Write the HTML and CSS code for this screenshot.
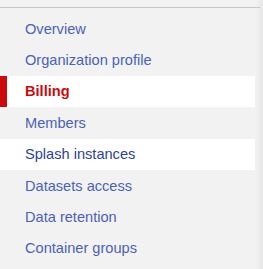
FILE: index.html
```html
<!DOCTYPE html>
<html lang="en">
<head>
    <meta charset="UTF-8">
    <meta name="viewport" content="width=device-width, initial-scale=1.0">
    <title>Organization settings</title>
    <link rel="stylesheet" href="styles.css">
</head>
<body>
    <div class="sidebar">
        <ul class="nav">
            <li><a href="#">Overview</a></li>
            <li><a href="#">Organization profile</a></li>
            <li class="active"><a href="#">Billing</a></li>
            <li><a href="#">Members</a></li>
            <li class="hover"><a href="#">Splash instances</a></li>
            <li><a href="#">Datasets access</a></li>
            <li><a href="#">Data retention</a></li>
            <li><a href="#">Container groups</a></li>
        </ul>
    </div>
</body>
</html>
```

FILE: styles.css
```css
/* Page */
body {
    margin: 0;
    font-family: "Liberation Sans", Arial, sans-serif;
    background: linear-gradient(to right, #f2f2f2 256px, #ebebeb 260px, #e6e6e6 261px, #ededed 263px);
    height: 269px;
}

/* Sidebar with top rule */
.sidebar {
    width: 260px;
    margin-top: 7px;
    border-top: 1px solid #c6c6c6;
    padding-top: 5px;
}

/* Menu */
.nav {
    list-style: none;
    margin: 0;
    padding: 0;
    width: 255px;
}

.nav li {
    height: 31.4px;
    display: flex;
    align-items: center;
    padding-left: 25px;
    position: relative;
}

.nav a {
    color: #4a62b6;
    font-size: 14.6px;
    text-decoration: none;
}

/* Current section */
.nav li.active {
    background-color: white;
}

.nav li.active::before {
    content: "";
    position: absolute;
    left: 0;
    top: 0;
    bottom: 0;
    width: 7px;
    background-color: #cc0a0a;
}

.nav li.active a {
    color: #cc0a0a;
    font-weight: bold;
}

/* Hovered row */
.nav li.hover {
    background-color: white;
}

.nav li.hover a {
    color: #2c439c;
}
```
